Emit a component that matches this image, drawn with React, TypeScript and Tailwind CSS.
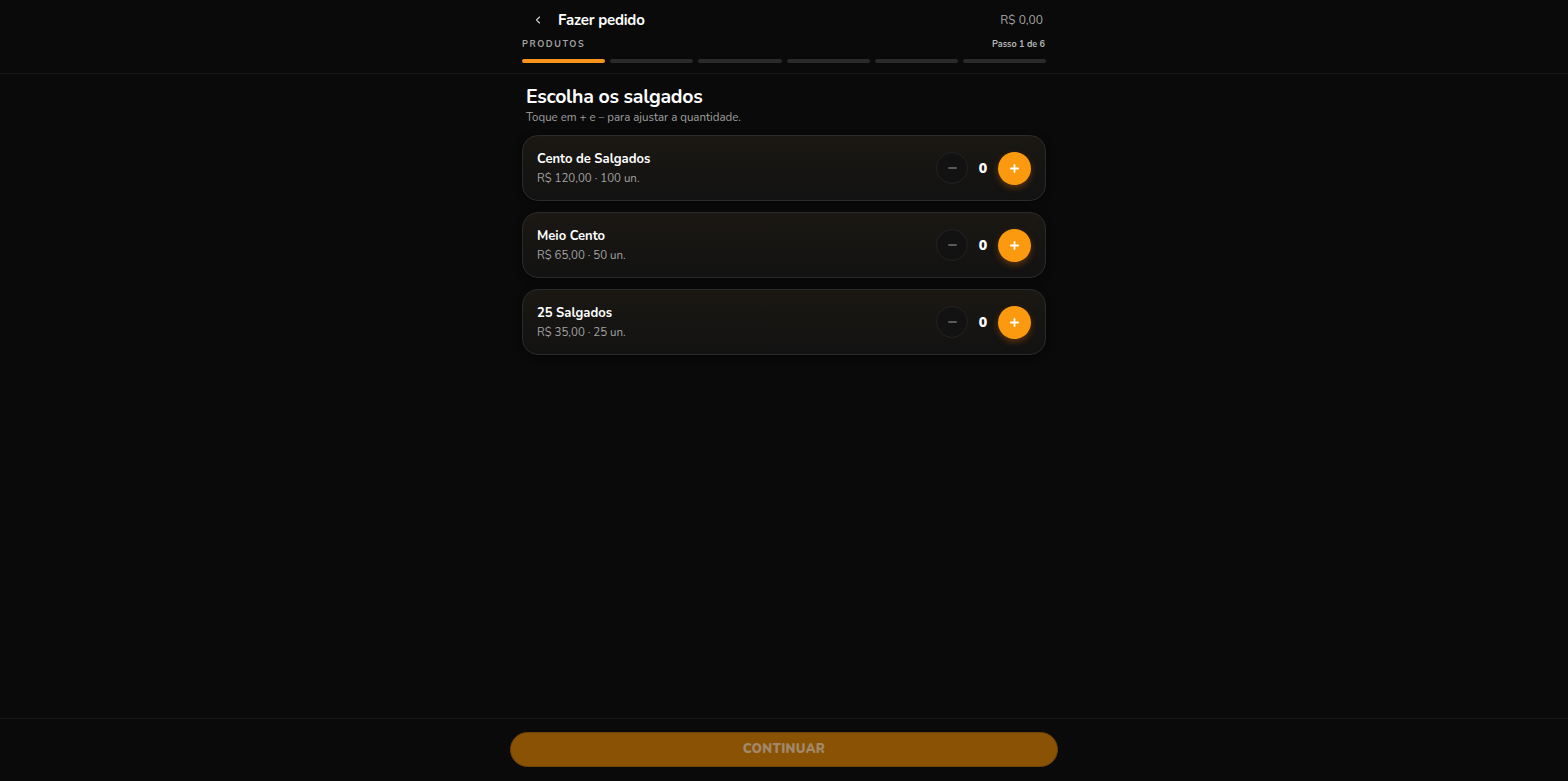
import React from "react";

const items = [
  { name: "Cento de Salgados", price: "R$ 120,00 · 100 un." },
  { name: "Meio Cento", price: "R$ 65,00 · 50 un." },
  { name: "25 Salgados", price: "R$ 35,00 · 25 un." },
];

export default function App() {
  return (
    <div
      className="min-h-screen h-[781px] bg-[#0a0a0a] text-white flex flex-col"
      style={{ fontFamily: "Nunito, Lato, 'Noto Sans', sans-serif" }}
    >
      <header className="border-b border-[#161616]">
        <div className="w-[524px] mx-auto pt-[9px] pb-[10px]">
          <div className="flex items-center justify-between h-[22px]">
            <div className="flex items-center">
              <button className="w-[30px] h-[22px] flex items-center justify-center text-[#d4d4d4] ml-[1px]">
                <svg width="12" height="12" viewBox="0 0 24 24" fill="none" stroke="currentColor" strokeWidth="2.2" strokeLinecap="round" strokeLinejoin="round">
                  <path d="M15 18l-6-6 6-6" />
                </svg>
              </button>
              <h1 className="ml-[5px] text-[15px] font-bold tracking-[-0.2px]">Fazer pedido</h1>
            </div>
            <span className="text-[12px] text-[#a8a8a8] mr-[3px]">R$ 0,00</span>
          </div>
          <div className="flex items-center justify-between mt-[6px] h-[16px]">
            <span className="text-[9px] font-bold tracking-[1.6px] text-[#a3a3a3]">PRODUTOS</span>
            <span className="text-[9px] font-bold text-[#b5b5b5] mr-[1px]">Passo 1 de 6</span>
          </div>
          <div className="flex gap-[5px] mt-[6px]">
            {[0, 1, 2, 3, 4, 5].map((i) => (
              <div
                key={i}
                className={
                  i === 0
                    ? "flex-1 h-[4px] rounded-full bg-[#f7931a]"
                    : "flex-1 h-[4px] rounded-full bg-[#2a2a2a]"
                }
              />
            ))}
          </div>
        </div>
      </header>

      <main className="flex-1">
        <div className="w-[524px] mx-auto pt-[10px]">
          <h2 className="px-[4px] text-[19.5px] font-bold leading-[26px] tracking-[-0.3px]">Escolha os salgados</h2>
          <p className="px-[4px] text-[11.5px] text-[#a0a0a0] leading-[14px]">Toque em + e – para ajustar a quantidade.</p>
          <div className="mt-[11px] flex flex-col gap-[11px]">
            {items.map((it) => (
              <div
                key={it.name}
                className="h-[66px] rounded-[16px] border border-[#2b2b2b] bg-gradient-to-b from-[#1b1813] to-[#121212] flex items-center justify-between pl-[14px] pr-[14px] shadow-[0_2px_6px_rgba(0,0,0,0.5)]"
              >
                <div className="flex flex-col">
                  <span className="text-[13px] font-bold leading-[18px]">{it.name}</span>
                  <span className="text-[11.5px] text-[#a3a3a3] leading-[16px] mt-[2px]">{it.price}</span>
                </div>
                <div className="flex items-center">
                  <button className="w-[32px] h-[32px] rounded-full border border-[#232323] bg-[#121212] flex items-center justify-center">
                    <span className="w-[9px] h-[2px] bg-[#5a5a5a] rounded" />
                  </button>
                  <span className="w-[30px] text-center text-[14px] font-black">0</span>
                  <button className="w-[33px] h-[33px] rounded-full bg-[#fb9a0e] flex items-center justify-center shadow-[0_3px_6px_rgba(180,90,0,0.45)]">
                    <svg width="9" height="9" viewBox="0 0 10 10" stroke="#fff" strokeWidth="2" strokeLinecap="round">
                      <path d="M5 1v8M1 5h8" />
                    </svg>
                  </button>
                </div>
              </div>
            ))}
          </div>
        </div>
      </main>

      <footer className="border-t border-[#181818] h-[63px] flex items-start justify-center pt-[13px]">
        <button className="w-[548px] h-[35px] rounded-full bg-[#8a5204] border border-[#6e4203] text-[13px] font-black text-[#a08868] tracking-[0.3px]">
          CONTINUAR
        </button>
      </footer>
    </div>
  );
}
